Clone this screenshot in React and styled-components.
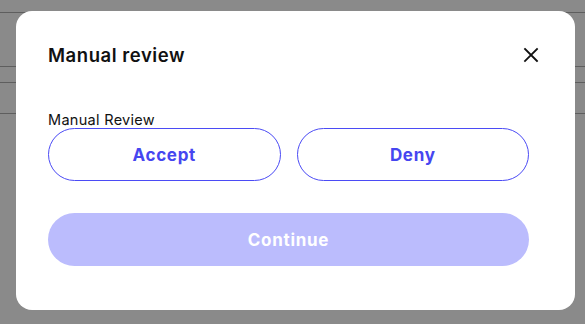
import React from "react";
import styled, { createGlobalStyle } from "styled-components";

const Global = createGlobalStyle`
  html, body {
    margin: 0;
    padding: 0;
    background: #8a8a8a;
  }
  body {
    font-family: Inter, "Noto Sans", sans-serif;
  }
`;

const Page = styled.div`
  position: relative;
  width: 585px;
  height: 324px;
  overflow: hidden;
  background: #8a8a8a;
`;

const Backdrop = styled.div`
  position: absolute;
  inset: 0;
  display: flex;
  flex-direction: column;

  hr {
    margin: 0;
    border: none;
    border-top: 1px solid #5e5e5e;
  }
`;

const Overlay = styled.div`
  position: absolute;
  inset: 0;
  padding: 11px 10px 14px 16px;
  display: flex;
`;

const Modal = styled.div`
  flex: 1;
  background: #fff;
  border-radius: 16px;
  padding: 34px 46px 44px 32px;
  display: flex;
  flex-direction: column;
`;

const Header = styled.div`
  display: flex;
  align-items: center;
  justify-content: space-between;
  height: 20px;
  margin-bottom: 46px;
`;

const Title = styled.h2`
  margin: 0;
  font-size: 18.5px;
  font-weight: 600;
  color: #111;
  letter-spacing: 0.55px;
`;

const Close = styled.button`
  border: none;
  background: none;
  padding: 0;
  margin-right: -10px;
  width: 16px;
  height: 16px;
  display: flex;
  cursor: pointer;
`;

const Label = styled.div`
  font-size: 14.5px;
  color: #111;
  line-height: 17px;
  letter-spacing: 0.3px;
`;

const Choices = styled.div`
  display: grid;
  grid-template-columns: 1fr 1fr;
  gap: 16px;
`;

const Choice = styled.button`
  height: 53px;
  border: 1px solid #4b4bf5;
  border-radius: 999px;
  background: #fff;
  color: #4646f0;
  font-family: inherit;
  font-size: 17px;
  font-weight: 700;
  letter-spacing: 0.7px;
  cursor: pointer;
`;

const Primary = styled.button`
  margin-top: 32px;
  height: 53px;
  border: none;
  border-radius: 999px;
  background: ${(p) => (p.disabled ? "#bbbcfd" : "#4b4bf5")};
  color: #fff;
  font-family: inherit;
  font-size: 17px;
  font-weight: 700;
  letter-spacing: 0.7px;
`;

export default function App() {
  return (
    <Page>
      <Global />
      <Backdrop>
        <div style={{ height: 12 }} />
        <hr />
        <div style={{ height: 53 }} />
        <hr />
        <div style={{ height: 15 }} />
        <hr />
        <div style={{ height: 30 }} />
        <hr />
      </Backdrop>
      <Overlay>
        <Modal>
          <Header>
            <Title>Manual review</Title>
            <Close aria-label="Close">
              <svg width="16" height="16" viewBox="0 0 16 16">
                <path d="M2 2L14 14M14 2L2 14" stroke="#111" strokeWidth="1.8" strokeLinecap="square" />
              </svg>
            </Close>
          </Header>
          <Label>Manual Review</Label>
          <Choices>
            <Choice>Accept</Choice>
            <Choice>Deny</Choice>
          </Choices>
          <Primary disabled>Continue</Primary>
        </Modal>
      </Overlay>
    </Page>
  );
}
